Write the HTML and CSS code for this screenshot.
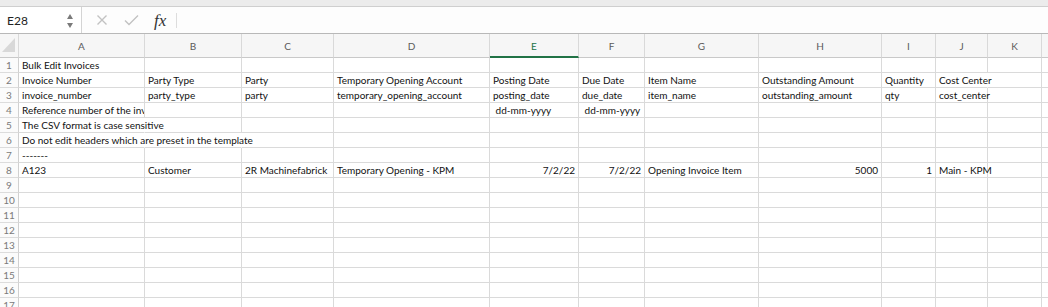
FILE: index.html
```html
<!DOCTYPE html>
<html>
<head>
    <title>Bulk Edit Invoices</title>
    <meta name="viewport" content="width=device-width, initial-scale=1">
    <link rel="stylesheet" href="styles.css">
</head>
<body>
    <div class="top-strip"></div>
    <div class="formula-bar">
        <div class="name-box">
            <span class="cell-ref">E28</span>
            <svg class="stepper" width="8" height="18" viewBox="0 0 8 18">
                <polygon points="4,2 7,7 1,7" fill="#7a7a7a"/>
                <polygon points="1,11 7,11 4,16" fill="#7a7a7a"/>
            </svg>
        </div>
        <div class="formula-actions">
            <svg class="action" width="12" height="12" viewBox="0 0 12 12">
                <path d="M1.5 1.5 L10.5 10.5 M10.5 1.5 L1.5 10.5" stroke="#c2c2c2" stroke-width="1.4" fill="none"/>
            </svg>
            <svg class="action" width="15" height="12" viewBox="0 0 15 12">
                <path d="M1 6.5 L5 10.5 L14 1.5" stroke="#c2c2c2" stroke-width="1.4" fill="none"/>
            </svg>
            <span class="fx">fx</span>
        </div>
        <div class="formula-input"></div>
    </div>

    <div class="sheet" id="sheet"></div>

    <script>
        const columns = ["A", "B", "C", "D", "E", "F", "G", "H", "I", "J", "K", ""];

        // each cell: [text, flags] where flags: r = right aligned, s = spills into next cell, c = clipped
        const rows = [
            [["Bulk Edit Invoices"]],
            [["Invoice Number"], ["Party Type"], ["Party"], ["Temporary Opening Account"], ["Posting Date"], ["Due Date"], ["Item Name"], ["Outstanding Amount"], ["Quantity"], ["Cost Center", "s"]],
            [["invoice_number"], ["party_type"], ["party"], ["temporary_opening_account"], ["posting_date"], ["due_date"], ["item_name"], ["outstanding_amount"], ["qty"], ["cost_center"]],
            [["Reference number of the invoice from the old system", "c"], [""], [""], [""], ["\u00a0dd-mm-yyyy"], ["\u00a0dd-mm-yyyy"]],
            [["The CSV format is case sensitive", "s"], [""]],
            [["Do not edit headers which are preset in the template", "s"], ["", "s"], [""]],
            [["-------"]],
            [["A123"], ["Customer"], ["2R Machinefabrick"], ["Temporary Opening - KPM"], ["7/2/22", "r"], ["7/2/22", "r"], ["Opening Invoice Item"], ["5000", "r"], ["1", "r"], ["Main - KPM"]]
        ];

        const sheet = document.getElementById("sheet");

        function addCell(className, text) {
            const cell = document.createElement("div");
            cell.className = className;
            cell.textContent = text;
            sheet.appendChild(cell);
            return cell;
        }

        const corner = addCell("head corner", "");
        corner.innerHTML = '<svg width="18" height="23" viewBox="0 0 18 23"><polygon points="2,18 15,18 15,4" fill="#d8d8d8"/></svg>';
        columns.forEach(letter => {
            addCell(letter === "E" ? "head col-head active" : "head col-head", letter);
        });

        for (let r = 0; r < 17; r++) {
            addCell("row-num", r + 1);
            const data = rows[r] || [];
            columns.forEach((letter, c) => {
                const item = data[c] || [""];
                const flags = item[1] || "";
                let className = "cell";
                if (flags.includes("r")) className += " right";
                if (flags.includes("s")) className += " spill";
                if (flags.includes("c")) className += " clip";
                addCell(className, item[0]);
            });
        }
    </script>
</body>
</html>
```

FILE: styles.css
```css
body {
    margin: 0;
    background-color: #ffffff;
    font-family: Lato, "Liberation Sans", sans-serif;
    color: #111111;
    overflow: hidden;
}

.top-strip {
    height: 6px;
    background-color: #ececec;
    border-bottom: 1px solid #cfcfcf;
}

.formula-bar {
    display: flex;
    align-items: center;
    height: 26px;
    background-color: #fdfdfd;
    border-bottom: 1px solid #b8b8b8;
}

.name-box {
    display: flex;
    align-items: center;
    justify-content: space-between;
    width: 82px;
    height: 100%;
    box-sizing: border-box;
    padding: 0 7px 0 7px;
    border-right: 1px solid #d4d4d4;
    background-color: #ffffff;
}

.cell-ref {
    font-size: 12px;
    color: #222222;
}

.stepper {
    margin-top: 1px;
}

.formula-actions {
    display: flex;
    align-items: center;
    height: 100%;
    padding-left: 14px;
}

.action {
    margin-right: 16px;
}

.action + .action {
    margin-right: 15px;
}

.fx {
    font-family: "Liberation Serif", serif;
    font-style: italic;
    font-size: 17px;
    color: #333333;
    padding-right: 10px;
    border-right: 1px solid #dddddd;
    line-height: 15px;
}

.formula-input {
    flex: 1;
}

.sheet {
    display: grid;
    grid-template-columns: 19px 126px 97px 92px 156px 89px 66px 114px 123px 54px 52px 54px 1fr;
    grid-template-rows: 24px;
    grid-auto-rows: 15px;
}

.head {
    box-sizing: border-box;
    background-color: #f6f6f6;
    border-right: 1px solid #d9d9d9;
    border-bottom: 1px solid #c9c9c9;
}

.corner {
    border-right: 1px solid #d9d9d9;
}

.col-head {
    display: flex;
    align-items: center;
    justify-content: center;
    font-size: 10px;
    color: #5a5a5a;
}

.col-head.active {
    color: #217346;
    border-bottom: 2px solid #217346;
    padding-top: 1px;
}

.row-num {
    box-sizing: border-box;
    background-color: #fbfbfb;
    border-right: 1px solid #d0d0d0;
    border-bottom: 1px solid #dcdcdc;
    font-size: 10px;
    line-height: 14px;
    color: #7a7a7a;
    text-align: center;
}

.cell {
    box-sizing: border-box;
    border-right: 1px solid #dadada;
    border-bottom: 1px solid #dadada;
    padding: 0 3px;
    font-size: 10px;
    line-height: 14px;
    white-space: nowrap;
}

.right {
    text-align: right;
}

.spill {
    border-right-color: transparent;
}

.clip {
    overflow: hidden;
}
```
